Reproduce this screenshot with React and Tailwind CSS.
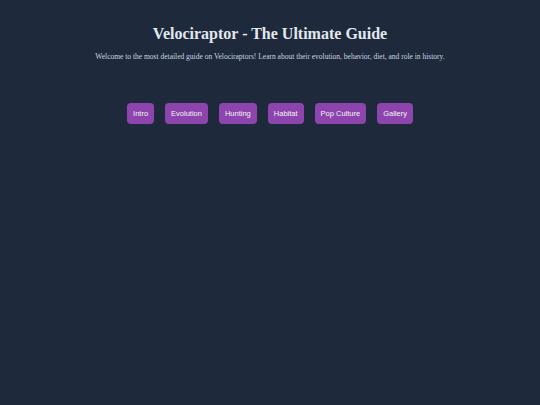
export default function App() {
  const items = ["Intro", "Evolution", "Hunting", "Habitat", "Pop Culture", "Gallery"];
  return (
    <div className="w-[540px] h-[405px] bg-[#1e293b] flex flex-col items-center">
      <h1 className="mt-[24px] text-[16px] leading-[20px] font-bold text-[#e2e8f0] font-['Liberation_Serif',serif]">
        Velociraptor - The Ultimate Guide
      </h1>
      <p className="mt-[8px] text-[7.5px] leading-[10px] text-[#cbd5e1] font-['Liberation_Serif',serif]">
        Welcome to the most detailed guide on Velociraptors! Learn about their evolution, behavior, diet, and role in history.
      </p>
      <nav className="mt-[41px] flex gap-[11px]">
        {items.map((t) => (
          <button key={t} className="h-[21px] px-[6px] rounded-[4px] bg-[#8e44ad] text-[#f3f4f6] text-[7.5px] font-['Liberation_Sans',sans-serif]">
            {t}
          </button>
        ))}
      </nav>
    </div>
  );
}
